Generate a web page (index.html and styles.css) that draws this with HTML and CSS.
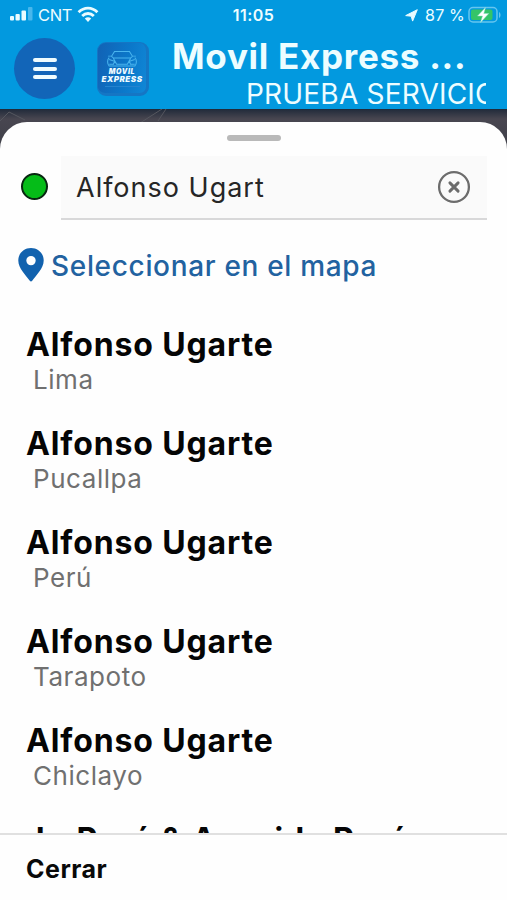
FILE: index.html
```html
<!DOCTYPE html>
<html lang="es">
<head>
<meta charset="utf-8">
<title>Movil Express</title>
<link rel="stylesheet" href="styles.css">
</head>
<body>
<div class="app">
  <header class="header">
    <div class="status">
      <div class="status-left">
        <svg class="signal" width="24" height="14" viewBox="0 0 24 14"><g fill="#e9fbff"><rect x="0" y="9" width="4" height="4.500" rx="1"/><rect x="5.500" y="7" width="4.300" height="6.500" rx="1"/><rect x="11.500" y="3.500" width="4.500" height="10" rx="1"/></g><rect x="18" y="0" width="4.500" height="13.500" rx="1" fill="#48b7ec"/></svg>
        <span class="carrier">CNT</span>
        <svg class="wifi" width="22" height="17" viewBox="0 0 22 17" fill="none" stroke="#e9fbff" stroke-width="2.900"><path d="M1.600 6.200C7 .7 15 .7 20.400 6.200"/><path d="M5.200 10c3.400-3.300 8.200-3.300 11.600 0"/><path d="M7.800 12.600c2-1.700 4.400-1.700 6.400 0L11 16z" fill="#e9fbff" stroke="none"/></svg>
      </div>
      <span class="clock">11:05</span>
      <div class="status-right">
        <svg width="13" height="13" viewBox="0 0 13 13"><path d="M12.300.7 7.600 12.100 6.200 7.200.7 6.600z" fill="#e9fbff" stroke="#e9fbff" stroke-linejoin="round"/></svg>
        <span class="percent">87 %</span>
        <svg class="battery" width="34" height="18" viewBox="0 0 34 18"><rect x="1" y="1.500" width="28" height="14.500" rx="4" fill="none" stroke="#66c5ef" stroke-width="1.500"/><path d="M31 6v6c2-.8 2-5.200 0-6" fill="#66c5ef"/><rect x="3" y="3.500" width="21.500" height="10.500" rx="2" fill="#35c468"/><path d="M17.500 1.500 9.500 10h5l-2 6.500 8.300-9h-5z" fill="#fff" stroke="#8de0c0" stroke-width=".5"/></svg>
      </div>
    </div>
    <div class="bar">
      <button class="menu" aria-label="Menú"><i></i><i></i><i></i></button>
      <div class="logo">
        <svg width="32" height="17" viewBox="3 0 30 18" preserveAspectRatio="none" fill="none" stroke="#49b4ee" stroke-width="1"><path d="M8 7 11 1.500h14L28 7M5 6.500h3l2 2h16l2-2h3M6 8c-2 2-2 7 0 9h24c2-2 2-7 0-9M10 9l3 6h10l3-6M6 10l5 2-1 3H6M30 10l-5 2 1 3h4"/></svg>
        <b class="logo-top">MOVIL</b>
        <b class="logo-bottom">EXPRESS</b>
        <span class="logo-line"></span>
      </div>
      <div class="titles">
        <h1>Movil Express ...</h1>
        <div class="marquee">PRUEBA SERVICIO</div>
      </div>
    </div>
  </header>
  <main class="map">
    <svg class="streets" width="507" height="40" viewBox="0 0 507 40" fill="none" stroke="#55575f"><path d="M0 12 9 3l16 8M140 14l22-14M158 12l8-12"/></svg>
    <section class="sheet">
      <div class="grip"></div>
      <div class="search">
        <span class="dot"></span>
        <div class="field">
          <span class="query">Alfonso Ugart</span>
          <svg width="34" height="34" viewBox="0 0 34 34" fill="none" stroke="#6c6c6c"><circle cx="17" cy="17" r="14.900" stroke-width="2.300"/><path d="m12.900 12.900 8.200 8.200m0-8.200-8.200 8.200" stroke-width="2.900" stroke-linecap="round"/></svg>
        </div>
      </div>
      <div class="pick">
        <svg width="26" height="34" viewBox="0 0 26 34"><path fill="#1262ae" fill-rule="evenodd" d="M13 0C5.800 0 .3 5.400.3 12.400.3 20.500 8 27 11.800 32.800c.6.900 1.800.9 2.400 0C18 27 25.700 20.500 25.700 12.400 25.700 5.400 20.200 0 13 0Zm0 7.900a4.700 4.700 0 1 1 0 9.400 4.700 4.700 0 0 1 0-9.400Z"/></svg>
        <span>Seleccionar en el mapa</span>
      </div>
      <ul class="results">
        <li><b>Alfonso Ugarte</b><span>Lima</span></li>
        <li><b>Alfonso Ugarte</b><span>Pucallpa</span></li>
        <li><b>Alfonso Ugarte</b><span>Perú</span></li>
        <li><b>Alfonso Ugarte</b><span>Tarapoto</span></li>
        <li><b>Alfonso Ugarte</b><span>Chiclayo</span></li>
        <li><b>Jr. Perú &amp; Avenida Perú</b></li>
      </ul>
      <footer class="footer">Cerrar</footer>
    </section>
  </main>
</div>
</body>
</html>
```

FILE: styles.css
```css
* { box-sizing: border-box; }
body { margin: 0; font-family: Inter, "Liberation Sans", sans-serif; }
.app { width: 507px; height: 900px; display: flex; flex-direction: column; overflow: hidden; background: #3b3c46; }
.header { height: 109px; flex: none; background: #0299df; color: #edfdff; }
.status { height: 30px; display: grid; grid-template-columns: 1fr auto 1fr; align-items: center; }
.status-left, .status-right { display: flex; align-items: center; }
.status-left { padding-left: 10px; }
.signal { margin-top: -2px; }
.carrier { font-size: 16.500px; margin-left: 4px; width: 34px; letter-spacing: -.4px; }
.wifi { margin: -2px 0 0 5px; }
.clock { font-size: 16px; font-weight: 600; letter-spacing: .5px; }
.status-right { justify-content: flex-end; padding-right: 5px; }
.percent { font-size: 16px; margin: 0 3px 0 7px; letter-spacing: .2px; white-space: nowrap; }
.bar { display: flex; height: 79px; }
.menu { width: 61px; height: 61px; margin: 8px 0 0 14px; border: 0; padding: 0; border-radius: 50%; background: #1265b8; display: flex; flex-direction: column; align-items: center; justify-content: center; gap: 4.500px; }
.menu i { width: 24px; height: 4px; border-radius: 2px; background: #effcff; }
.logo { width: 52px; height: 54px; margin: 12px 0 0 22px; border-radius: 9px; border: 1px solid #1576c4; border-right-width: 3px; border-bottom-width: 3px; background: linear-gradient(100deg, #1262b5, #0b78ca 60%, #1087d6); display: flex; flex-direction: column; align-items: center; padding-top: 7px; }
.logo-top, .logo-bottom { font-style: italic; font-weight: 900; line-height: 8px; color: #f0fbff; }
.logo-top { font-size: 7px; letter-spacing: .6px; line-height: 7px; margin-top: 1px; }
.logo-bottom { font-size: 8px; letter-spacing: .5px; }
.logo-line { width: 35px; height: 1px; margin-top: 3px; background: #2483cf; }
.titles { margin-left: 23px; width: 314px; }
h1 { margin: 6px 0 0; font-size: 35px; line-height: 40px; font-weight: 700; letter-spacing: .72px; white-space: nowrap; }
.marquee { margin-left: 74px; width: 240px; height: 28px; overflow: hidden; font-size: 28px; line-height: 36px; letter-spacing: .2px; white-space: nowrap; }
.map { position: relative; flex: 1; min-height: 0; padding-top: 13px; background: linear-gradient(#202a3a, #484650 10px, #3e3f48 40px); display: flex; }
.streets { position: absolute; left: 0; top: 0; }
.sheet { position: relative; flex: 1; min-height: 0; display: flex; flex-direction: column; background: #fefefe; border-radius: 27px 27px 0 0; overflow: hidden; }
.grip { width: 54px; height: 6px; border-radius: 3px; margin: 13px auto 0; flex: none; background: #b9b9b9; }
.search { display: flex; align-items: center; margin: 15px 20px 0 21px; height: 64px; flex: none; }
.dot { width: 27px; height: 27px; border-radius: 50%; border: 2px solid #092711; background: #05bc18; margin: -3px 13px 0 0; }
.field { flex: 1; height: 64px; padding: 0 16px 0 15px; display: flex; align-items: center; justify-content: space-between; background: #fafafa; border-bottom: 2px solid #d8d8d9; }
.field svg { margin-top: -1px; }
.query { font-size: 27px; letter-spacing: 1px; color: #262626; padding-top: 1px; }
.pick { height: 34px; margin: 28px 0 0 18px; display: flex; align-items: center; gap: 7px; flex: none; color: #2262a0; font-size: 28px; font-weight: 500; letter-spacing: .67px; white-space: nowrap; }
.pick span { padding-top: 2px; }
.results { list-style: none; margin: 43px 0 0; padding: 0 26px; flex: 1; min-height: 0; overflow: hidden; }
.results li { height: 72px; margin-bottom: 27px; white-space: nowrap; }
.results b { display: block; font-size: 32px; line-height: 40px; font-weight: 700; letter-spacing: .87px; color: #050505; }
.results span { display: block; padding-left: 7px; margin-top: -1px; font-size: 26px; line-height: 32px; color: #707070; letter-spacing: .55px; }
.footer { height: 67px; flex: none; border-top: 2px solid #e0e0e0; padding: 18px 26px 0; font-size: 25px; line-height: 32px; font-weight: 700; letter-spacing: .5px; color: #090909; }
```
